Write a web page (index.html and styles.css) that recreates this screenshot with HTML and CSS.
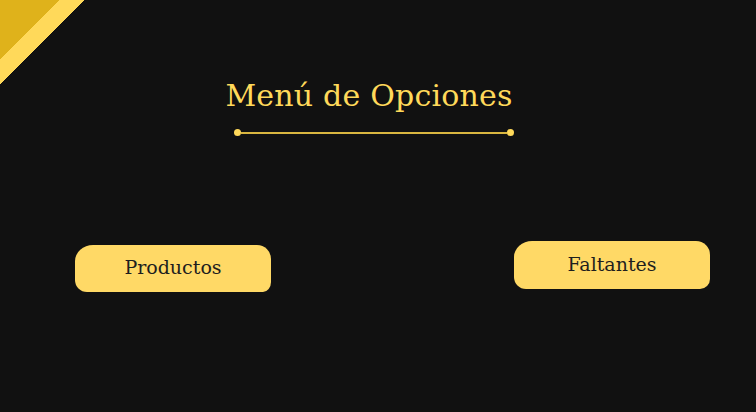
FILE: index.html
```html
<!DOCTYPE html>
<html lang="es">
<head>
<meta charset="utf-8">
<title>Menú de Opciones</title>
<link rel="stylesheet" href="styles.css">
</head>
<body>
<div class="corner"></div>
<main class="page">
  <header class="header">
    <h1 class="title">Menú de Opciones</h1>
    <div class="divider"><span class="dot"></span><span class="rule"></span><span class="dot"></span></div>
  </header>
  <nav class="options">
    <a class="btn btn-left" href="#">Productos</a>
    <a class="btn btn-right" href="#">Faltantes</a>
  </nav>
</main>
</body>
</html>
```

FILE: styles.css
```css
* { box-sizing: border-box; }
html, body { margin: 0; padding: 0; }
body {
  background: #111111;
  width: 756px;
  height: 412px;
  overflow: hidden;
  font-family: "DejaVu Serif", "Liberation Serif", serif;
  position: relative;
}
.corner {
  position: absolute;
  left: 0;
  top: 0;
  width: 100px;
  height: 100px;
  background: linear-gradient(135deg, #dfb21b 0 42.4px, #ffd95a 42.4px 59.5px, transparent 59.5px);
}
.page {
  display: flex;
  flex-direction: column;
}
.header {
  display: flex;
  flex-direction: column;
  align-items: center;
  padding-top: 76px;
  padding-right: 8px;
}
.title {
  margin: 0;
  font-weight: 400;
  font-size: 30px;
  line-height: 40px;
  letter-spacing: 0.2px;
  color: #ffd95a;
  margin-right: 10px;
}
.divider {
  display: flex;
  align-items: center;
  width: 280px;
  margin-top: 13px;
}
.dot {
  width: 7px;
  height: 7px;
  border-radius: 50%;
  background: #ffd95a;
  flex: none;
}
.rule {
  flex: 1;
  height: 2px;
  background: #d9b640;
}
.options {
  display: flex;
  justify-content: space-between;
  align-items: flex-start;
  padding: 0 46px 0 75px;
  margin-top: 105px;
}
.btn {
  display: flex;
  align-items: center;
  justify-content: center;
  width: 196px;
  height: 47px;
  background: #ffd966;
  color: #1e1e1e;
  text-decoration: none;
  font-size: 19px;
  padding-bottom: 3px;
}
.btn-left {
  margin-top: 4px;
  border-radius: 18px 14px 8px 12px / 16px 14px 10px 12px;
}
.btn-right {
  height: 48px;
  border-radius: 18px 14px 10px 12px / 16px 14px 10px 12px;
}
```
